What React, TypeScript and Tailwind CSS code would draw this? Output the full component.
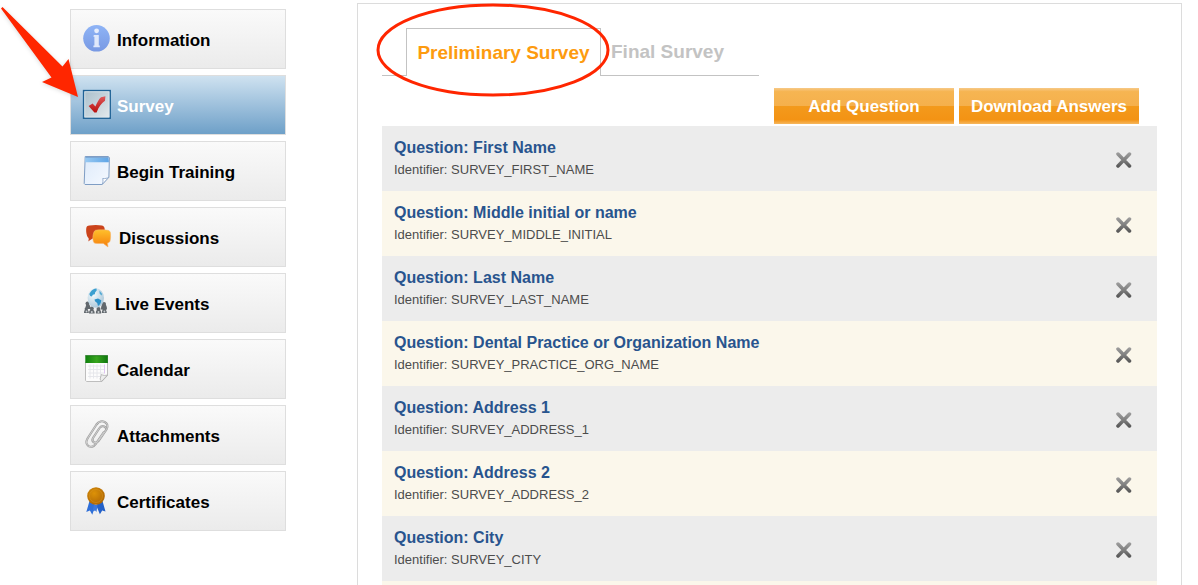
import { useState, type ReactNode } from 'react';

const iconClass = 'h-8 w-7 shrink-0 overflow-visible';

function InformationIcon() {
  return (
    <svg viewBox="0 0 28 32" className={iconClass} aria-hidden="true">
      <defs>
        <linearGradient id="info" x1="0" y1="0" x2="0" y2="1">
          <stop offset="0" stopColor="#8fb4f6" />
          <stop offset="1" stopColor="#7899e3" />
        </linearGradient>
      </defs>
      <circle cx="13.500" cy="15.300" r="13.300" fill="url(#info)" />
      <circle cx="13.600" cy="7.800" r="2.400" fill="#e6edfc" />
      <path d="M10.800 12h5v10.400h1v1.800h-6.400v-1.800h1v-8.600h-1z" fill="#dfe8fb" />
    </svg>
  );
}

function SurveyIcon() {
  return (
    <svg viewBox="0 0 28 32" className={iconClass} aria-hidden="true">
      <defs>
        <linearGradient id="box" x1="0" y1="0" x2="1" y2="1">
          <stop offset="0" stopColor="#a9bfcb" />
          <stop offset="0.6" stopColor="#cbd8df" />
          <stop offset="1" stopColor="#e4eaed" />
        </linearGradient>
        <linearGradient id="tick" x1="0" y1="0" x2="0" y2="1">
          <stop offset="0" stopColor="#e05a5c" />
          <stop offset="1" stopColor="#b80f0c" />
        </linearGradient>
      </defs>
      <rect x="0.6" y="1.6" width="26.6" height="27.6" fill="url(#box)" stroke="#1f6296" strokeWidth="1.5" />
      <rect x="1.8" y="2.8" width="24.2" height="25.2" fill="none" stroke="#dfe9ee" strokeWidth="0.8" />
      <path d="M5.600 17 9.600 14.600 12.400 17.400C14.200 13 16 10 18 8.200L22.400 7.200 22 11.800C18.500 14 16 17.500 13.600 23.400L11.400 23.600z" fill="url(#tick)" />
    </svg>
  );
}

function TrainingIcon() {
  return (
    <svg viewBox="0 0 28 32" className={iconClass} aria-hidden="true">
      <defs>
        <linearGradient id="page" x1="0" y1="0" x2="1" y2="1">
          <stop offset="0" stopColor="#ddeafa" />
          <stop offset="1" stopColor="#f5f9ff" />
        </linearGradient>
        <linearGradient id="pagebar" x1="0" y1="0" x2="1" y2="0">
          <stop offset="0" stopColor="#98c9f2" />
          <stop offset="1" stopColor="#5fa5e6" />
        </linearGradient>
      </defs>
      <path d="M2.200 1.500h23.200l1 1.200-.5 19.500-6.800 7.300H2l-.8-1z" fill="url(#page)" stroke="#7f9dc4" strokeWidth="1" />
      <path d="M2.500 2h23l.4 5.200H2z" fill="url(#pagebar)" />
      <path d="M2.500 2.500h23" stroke="#7da8d5" />
      <path d="m25.900 22.200-6.800 7.300c1-2.200 1.100-4 .6-6 2.300.3 4.400-.2 6.200-1.300z" fill="#fff" stroke="#8fa8cb" strokeWidth="0.900" />
    </svg>
  );
}

function DiscussionsIcon() {
  return (
    <svg viewBox="0 0 28 32" className={iconClass} aria-hidden="true">
      <defs>
        <linearGradient id="bubble" x1="0" y1="0" x2="0" y2="1">
          <stop offset="0" stopColor="#ffc02b" />
          <stop offset="1" stopColor="#f57e0c" />
        </linearGradient>
      </defs>
      <path d="M6.500 4.500c4-.8 9-.8 12.500.1 2 .4 2.700 2 2.700 4v6c-2 2.400-7 3.400-12 2.800L5 20.600c.8-1.500.9-2.700.5-3.700C3 15 2.500 6.500 4.100 5.200c.6-.5 1.400-.6 2.400-.7z" fill="#cb431b" />
      <path d="M12.500 9.300c4-.6 8-.6 12.300 0 1.600.3 2.500 1.200 2.700 3 .3 2.500.1 5.500-.4 7.500-.4 1.400-1.200 2-2.600 2.200l.5 4-4.700-3.600c-3 .3-6 .2-8.400-.2-3.200-.6-2.300-11.900.6-12.900z" fill="url(#bubble)" stroke="#f6b36a" strokeWidth="0.6" />
    </svg>
  );
}

function EventsIcon() {
  return (
    <svg viewBox="0 0 28 32" className={iconClass} aria-hidden="true">
      <defs>
        <radialGradient id="globe" cx="0.35" cy="0.3" r="0.800">
          <stop offset="0" stopColor="#f4fafd" />
          <stop offset="1" stopColor="#a5c3d6" />
        </radialGradient>
      </defs>
      <g fill="#62686d">
        <circle cx="4.500" cy="16.500" r="2" /><path d="M2.500 22c0-4 1-5 2.500-5s2.500 2 2.500 5z" />
        <circle cx="21" cy="17" r="2" /><path d="M18 22.500c0-4 1-5.500 3-5.500s3 2 3 5.500z" />
        <circle cx="3.300" cy="22" r="1.700" /><path d="M1 26c0-2.500.7-3.500 2.300-3.500S5.800 24 5.800 26z" />
        <circle cx="8.800" cy="21.500" r="2" /><path d="M6 26.500c0-3 .9-4 2.800-4s2.900 1.500 2.900 4z" />
        <circle cx="15.500" cy="22" r="2" /><path d="M12.800 26.500c0-3 .9-4 2.700-4s2.700 1.500 2.700 4z" />
        <circle cx="21.300" cy="22" r="1.900" /><path d="M18.800 26c0-2.500.8-3.500 2.500-3.500s2.500 1.500 2.500 3.500z" />
      </g>
      <g fill="#c9ced1">
        <circle cx="3.500" cy="24.500" r="0.900" /><circle cx="8.800" cy="25" r="1" />
        <circle cx="15.500" cy="25" r="1" /><circle cx="21.400" cy="24.500" r="0.900" />
      </g>
      <ellipse cx="12.800" cy="11" rx="8.200" ry="9.800" fill="url(#globe)" />
      <path d="M7.500 5c1.500-2.200 3.500-3.300 6-3.400l.2 2-1.500 1.700-.4 2-1.900.4-1.200 1.700-1.500-.5-.9-1.800z" fill="#3b9fd0" />
      <path d="m11.500 12.500 3.500-1 3.300 1.700c-.3 2.800-1.300 4.500-3.300 5.700l-.8-3-2.200-1.700z" fill="#2d91c8" />
      <path d="m16.500 3.500 2.700 3.500-.8 1.500-1.800-2z" fill="#55abd5" />
    </svg>
  );
}

function CalendarIcon() {
  return (
    <svg viewBox="0 0 28 32" className={iconClass} aria-hidden="true">
      <defs>
        <linearGradient id="calbar" x1="0" y1="0" x2="1" y2="0">
          <stop offset="0" stopColor="#0f800e" />
          <stop offset="0.5" stopColor="#37a51d" />
          <stop offset="1" stopColor="#0f760e" />
        </linearGradient>
      </defs>
      <path d="M2.500 9h22v13.500L18.800 28.500H3.700l-1.200-1z" fill="#fcfcfc" stroke="#bebebe" />
      <path d="M5 13h17M5 16.500h17M5 20h16M5 23.500h13M7 11.500v14M10.500 11.500v14M14 11.500v14M17.500 11.500v11" stroke="#e4e5ea" strokeWidth="0.900" />
      <path d="M21.500 11.500v9" stroke="#dfc5f0" />
      <path d="M2.300 2.500h22.600V10H2.300z" fill="url(#calbar)" />
      <path d="M2.300 2.700h22.600" stroke="#176c14" strokeWidth="0.800" />
      <path d="M24.500 22 18.600 28.500c-.6-1.200-1.300-1.400-1.500-2.500l1.300-4.500c1.700 1 3.900 1.200 6.100.5z" fill="#ededed" stroke="#aaa" strokeWidth="0.800" />
    </svg>
  );
}

function AttachmentsIcon() {
  const clip = 'M20.500 13.500 12.800 24.800C8.500 31 0.500 26.500 4.500 19.500L13.500 5.500C18-1 27.500 3.500 23.500 10.500L15.500 22C12.500 25.500 8 23 10 19L16.500 9C18 6.500 21 6.500 22.500 8.500';
  return (
    <svg viewBox="0 0 28 32" className={iconClass} fill="none" strokeLinecap="round" aria-hidden="true">
      <path d={clip} stroke="#a0a0a0" strokeWidth="2.200" />
      <path d={clip} stroke="#cfcfcf" strokeWidth="1" />
    </svg>
  );
}

function CertificatesIcon() {
  return (
    <svg viewBox="0 0 28 32" className={iconClass} aria-hidden="true">
      <defs>
        <radialGradient id="medal" cx="0.4" cy="0.350" r="0.7">
          <stop offset="0" stopColor="#dd9207" />
          <stop offset="1" stopColor="#ad6505" />
        </radialGradient>
      </defs>
      <path d="M6.500 16 3.300 27l3.600-1.500 2.400 4.300L12.500 20z" fill="#2f6fd8" />
      <path d="M19.500 16l3 10.500-3.300-1-2.300 3.800L13 20z" fill="#2461c9" />
      <path d="m11 19.500-1.500 7 2.600-1 1.400 1.500 1-7z" fill="#3b78dc" />
      <circle cx="13" cy="11" r="8.800" fill="url(#medal)" />
      <circle cx="13" cy="11" r="6.500" fill="none" stroke="#e09d24" strokeWidth="0.700" opacity="0.600" />
    </svg>
  );
}

type NavItem = { label: string; icon: ReactNode; gap: string };

const navItems: NavItem[] = [
  { label: 'Information', icon: <InformationIcon />, gap: 'gap-1.5' },
  { label: 'Survey', icon: <SurveyIcon />, gap: 'gap-1.5' },
  { label: 'Begin Training', icon: <TrainingIcon />, gap: 'gap-1.5' },
  { label: 'Discussions', icon: <DiscussionsIcon />, gap: 'gap-2' },
  { label: 'Live Events', icon: <EventsIcon />, gap: 'gap-1' },
  { label: 'Calendar', icon: <CalendarIcon />, gap: 'gap-1.5' },
  { label: 'Attachments', icon: <AttachmentsIcon />, gap: 'gap-1.5' },
  { label: 'Certificates', icon: <CertificatesIcon />, gap: 'gap-1.5' },
];

const initialQuestions = [
  { title: 'First Name', identifier: 'SURVEY_FIRST_NAME' },
  { title: 'Middle initial or name', identifier: 'SURVEY_MIDDLE_INITIAL' },
  { title: 'Last Name', identifier: 'SURVEY_LAST_NAME' },
  { title: 'Dental Practice or Organization Name', identifier: 'SURVEY_PRACTICE_ORG_NAME' },
  { title: 'Address 1', identifier: 'SURVEY_ADDRESS_1' },
  { title: 'Address 2', identifier: 'SURVEY_ADDRESS_2' },
  { title: 'City', identifier: 'SURVEY_CITY' },
];

function Sidebar() {
  return (
    <nav className="mt-[9px] flex w-[216px] shrink-0 flex-col gap-1.5">
      {navItems.map((item) => {
        const active = item.label === 'Survey';
        return (
          <a
            key={item.label}
            href="#"
            aria-current={active ? 'page' : undefined}
            className={`flex h-15 items-center border border-[#dedede] bg-linear-to-b pl-3 text-[17px] font-bold ${item.gap} ${
              active ? 'from-[#cfe2f0] to-[#6ea0c8] text-white' : 'from-[#fafafa] to-[#ebebeb] text-black'
            }`}
          >
            {item.icon}
            <span className="pt-1">{item.label}</span>
          </a>
        );
      })}
    </nav>
  );
}

function RemoveIcon() {
  return (
    <svg viewBox="0 0 16 16" className="size-4" aria-hidden="true">
      <defs>
        <linearGradient id="cross" x1="0" y1="0" x2="0" y2="16" gradientUnits="userSpaceOnUse">
          <stop offset="0" stopColor="#a0a0a0" />
          <stop offset="0.5" stopColor="#7f7f7f" />
          <stop offset="1" stopColor="#505050" />
        </linearGradient>
      </defs>
      <path d="M2 2 13.500 14M13.500 2 2 14" stroke="url(#cross)" strokeWidth="3.500" strokeLinecap="round" />
    </svg>
  );
}

const actionClass =
  'h-9 w-[180px] bg-[linear-gradient(#f7c988_0%,#f6b552_10%,#f5b04c_49%,#f39a1c_51%,#f39314_88%,#f6b75e_100%)] text-[17px] leading-none font-bold text-white';

export default function App() {
  const [questions, setQuestions] = useState(initialQuestions);

  return (
    <div className="relative flex h-screen overflow-hidden bg-white pr-4 pl-[70px] font-['Liberation_Sans',Arial,sans-serif]">
      <Sidebar />
      <main className="mt-[3px] ml-[71px] flex min-w-0 flex-1 flex-col border-x border-t border-[#dcdcdc] px-6 pt-6">
        <div role="tablist" className="flex w-[377px] max-w-full text-[19px] font-bold">
          <span className="w-6 shrink-0 border-b border-[#c3c3c3]" />
          <div className="relative shrink-0">
            <button role="tab" aria-selected="true" className="h-12 w-[195px] border-x border-t border-[#c3c3c3] pt-0.5 text-[#fd9b0f]">
              Preliminary Survey
            </button>
            <svg viewBox="0 0 234 94" className="pointer-events-none absolute -top-[25px] -left-[30px] h-[94px] w-[234px]" aria-hidden="true">
              <ellipse cx="117" cy="47" rx="115" ry="45" fill="none" stroke="#ff2600" strokeWidth="3" />
            </svg>
          </div>
          <button role="tab" aria-selected="false" className="h-12 flex-1 border-b border-[#c3c3c3] pt-0.5 pl-2.5 text-left text-[#c3c3c3]">
            Final Survey
          </button>
        </div>

        <div className="mt-3 flex justify-end gap-[5px] pr-[18px]">
          <button className={actionClass}>Add Question</button>
          <button className={actionClass}>Download Answers</button>
        </div>

        <ul className="mt-0.5 flex flex-1 flex-col">
          {questions.map((q) => (
            <li key={q.identifier} className="flex h-[65px] shrink-0 items-center justify-between pr-[25px] pl-3 odd:bg-[#ececec] even:bg-[#fbf7eb]">
              <div className="pb-px">
                <h3 className="text-base leading-6 font-bold text-[#28548e]">Question: {q.title}</h3>
                <p className="text-[13px] leading-5 text-[#4c4c4c]">Identifier: {q.identifier}</p>
              </div>
              <button
                aria-label={`Remove ${q.title}`}
                className="mt-0.5"
                onClick={() => setQuestions(questions.filter((other) => other !== q))}
              >
                <RemoveIcon />
              </button>
            </li>
          ))}
          <li aria-hidden="true" className="flex-1 bg-[#fbf7eb]" />
        </ul>
      </main>

      <svg viewBox="0 0 82 102" className="pointer-events-none absolute top-0 left-0 h-[102px] w-[82px] drop-shadow-sm" aria-hidden="true">
        <path d="M1 8.500 2.500 7 62.500 66.500l6-7.500L78 97 42 82l9.500-4.500z" fill="#ff2600" />
      </svg>
    </div>
  );
}
